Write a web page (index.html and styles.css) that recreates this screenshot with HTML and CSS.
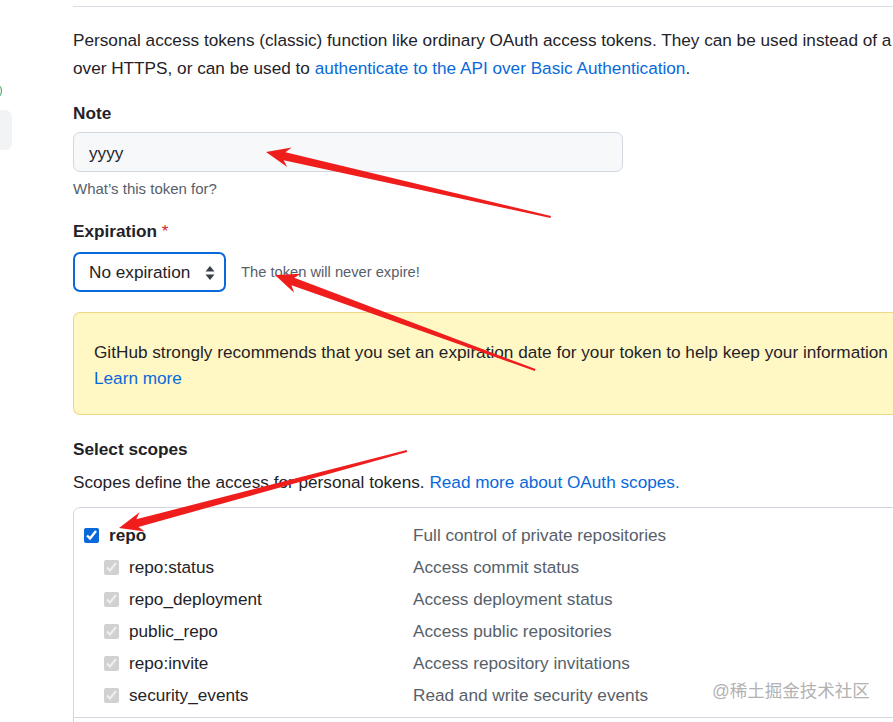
FILE: index.html
```html
<!DOCTYPE html>
<html lang="en">
<head>
<meta charset="utf-8">
<title>New personal access token (classic)</title>
<link rel="stylesheet" href="styles.css">
</head>
<body>
<div class="page">
  <aside class="sidebar">
    <div class="side-badge"></div>
    <div class="side-item"></div>
  </aside>
  <main class="main">
    <div class="subhead"></div>
    <p class="intro">Personal access tokens (classic) function like ordinary OAuth access tokens. They can be used instead of a password for Git<br>over HTTPS, or can be used to <a href="#">authenticate to the API over Basic Authentication</a>.</p>

    <div class="field">
      <label class="label">Note</label>
      <div class="input">yyyy</div>
      <p class="hint">What’s this token for?</p>
    </div>

    <div class="field field-exp">
      <label class="label">Expiration <span class="req">*</span></label>
      <div class="exp-row">
        <div class="select">
          <span>No expiration</span>
          <svg class="updown" width="10" height="16" viewBox="0 0 10 16"><path d="M5 1 L9.5 6.5 H0.5 Z M5 15 L9.5 9.5 H0.5 Z" fill="#3a4048"/></svg>
        </div>
        <span class="exp-note">The token will never expire!</span>
      </div>
    </div>

    <div class="flash">
      <p class="flash-text">GitHub strongly recommends that you set an expiration date for your token to help keep your information secure.</p>
      <a class="flash-link" href="#">Learn more</a>
    </div>

    <h3 class="scopes-title">Select scopes</h3>
    <p class="scopes-desc">Scopes define the access for personal tokens. <a href="#">Read more about OAuth scopes.</a></p>

    <div class="scopes">
      <div class="group">
        <div class="row">
          <label class="name parent"><input type="checkbox" checked><span>repo</span></label>
          <span class="desc">Full control of private repositories</span>
        </div>
        <div class="row">
          <label class="name child"><input type="checkbox" checked disabled><span>repo:status</span></label>
          <span class="desc">Access commit status</span>
        </div>
        <div class="row">
          <label class="name child"><input type="checkbox" checked disabled><span>repo_deployment</span></label>
          <span class="desc">Access deployment status</span>
        </div>
        <div class="row">
          <label class="name child"><input type="checkbox" checked disabled><span>public_repo</span></label>
          <span class="desc">Access public repositories</span>
        </div>
        <div class="row">
          <label class="name child"><input type="checkbox" checked disabled><span>repo:invite</span></label>
          <span class="desc">Access repository invitations</span>
        </div>
        <div class="row">
          <label class="name child"><input type="checkbox" checked disabled><span>security_events</span></label>
          <span class="desc">Read and write security events</span>
        </div>
      </div>
      <div class="group"></div>
    </div>
  </main>
</div>

<svg class="arrows" width="893" height="722" viewBox="0 0 893 722">
  <g fill="#f01d1d">
    <polygon transform="translate(266,152) rotate(192.85)" points="-292,-1 -19,-4 -24,-10 0,0 -24,10 -19,4 -292,1"/>
    <polygon transform="translate(275,275) rotate(200.07)" points="-277,-1 -19,-4 -24,-10 0,0 -24,10 -19,4 -277,1"/>
    <polygon transform="translate(119,528) rotate(165.03)" points="-298,-1 -19,-4 -24,-10 0,0 -24,10 -19,4 -298,1"/>
  </g>
</svg>

<div class="watermark">@稀土掘金技术社区</div>
</body>
</html>
```

FILE: styles.css
```css
html, body {
  margin: 0;
  padding: 0;
  overflow: hidden;
  background: #ffffff;
}

body {
  position: relative;
  width: 893px;
  height: 722px;
  font-family: "Liberation Sans", Arial, sans-serif;
  font-size: 17.2px;
  color: #1f2328;
}

a {
  color: #0969da;
  text-decoration: none;
}

.page {
  display: flex;
  width: 1300px;
}

/* cut-off sidebar on the left */
.sidebar {
  flex: none;
  width: 13px;
  overflow: hidden;
}

.side-badge {
  width: 16px;
  height: 16px;
  border: 1.5px solid #2da44e;
  border-radius: 50%;
  margin-left: -16px;
  margin-top: 82px;
}

.side-item {
  width: 60px;
  height: 40px;
  margin-left: -48px;
  margin-top: 10px;
  border-radius: 7px;
  background: #f1f3f5;
}

.main {
  flex: none;
  width: 1150px;
  margin-left: 60px;
}

.subhead {
  height: 6px;
  border-bottom: 1px solid #d8dee4;
}

.intro {
  margin: 19px 0 0;
  line-height: 28px;
  white-space: nowrap;
}

.field {
  margin-top: 19px;
}

.label {
  display: block;
  font-weight: 700;
  line-height: 24px;
}

.req {
  color: #cf222e;
  font-weight: 400;
}

.input {
  box-sizing: border-box;
  width: 550px;
  height: 40px;
  margin-top: 7px;
  padding: 3px 15px 0;
  border: 1px solid #d0d7de;
  border-radius: 7px;
  background: #f6f8fa;
  line-height: 35px;
}

.hint {
  margin: 7px 0 0;
  font-size: 15px;
  line-height: 20px;
  color: #57606a;
}

.field-exp {
  margin-top: 20px;
}

.exp-row {
  display: flex;
  align-items: center;
  margin-top: 9px;
}

.select {
  box-sizing: border-box;
  width: 153px;
  height: 40px;
  display: flex;
  align-items: center;
  justify-content: space-between;
  padding: 1px 9px 0 14px;
  border: 2px solid #0969da;
  border-radius: 7px;
  background: #ffffff;
}

.updown {
  display: block;
}

.exp-note {
  margin-left: 15px;
  font-size: 14.7px;
  color: #57606a;
}

.flash {
  box-sizing: border-box;
  width: 1000px;
  margin-top: 20px;
  padding: 26px 20px 23px;
  border: 1px solid rgba(212, 167, 44, 0.4);
  border-radius: 7px;
  background: #fff8c5;
  line-height: 26px;
}

.flash-text {
  margin: 0;
  white-space: nowrap;
}

.flash-link {
  display: inline-block;
}

.scopes-title {
  margin: 22px 0 0;
  font-size: 17.2px;
  font-weight: 700;
  line-height: 24px;
}

.scopes-desc {
  margin: 8px 0 0;
  line-height: 26px;
}

.scopes {
  width: 1000px;
  margin-top: 12px;
  border: 1px solid #d0d7de;
  border-radius: 7px;
}

.group {
  padding: 11px 0 6px;
  border-bottom: 1px solid #d0d7de;
}

.row {
  display: flex;
  align-items: center;
  height: 32px;
}

.name {
  box-sizing: border-box;
  width: 339px;
  display: flex;
  align-items: center;
  gap: 10px;
}

.name input {
  margin: 0;
  width: 15px;
  height: 15px;
  accent-color: #0969da;
}

.parent {
  padding-left: 10px;
  font-weight: 700;
}

.child {
  padding-left: 30px;
}

.desc {
  color: #57606a;
}

.arrows {
  position: absolute;
  top: 0;
  left: 0;
  pointer-events: none;
}

.watermark {
  position: absolute;
  left: 712px;
  top: 680px;
  font-family: "Liberation Sans", "Noto Sans CJK SC", sans-serif;
  font-size: 17.5px;
  line-height: 22px;
  color: #b2b2b2;
}
```
